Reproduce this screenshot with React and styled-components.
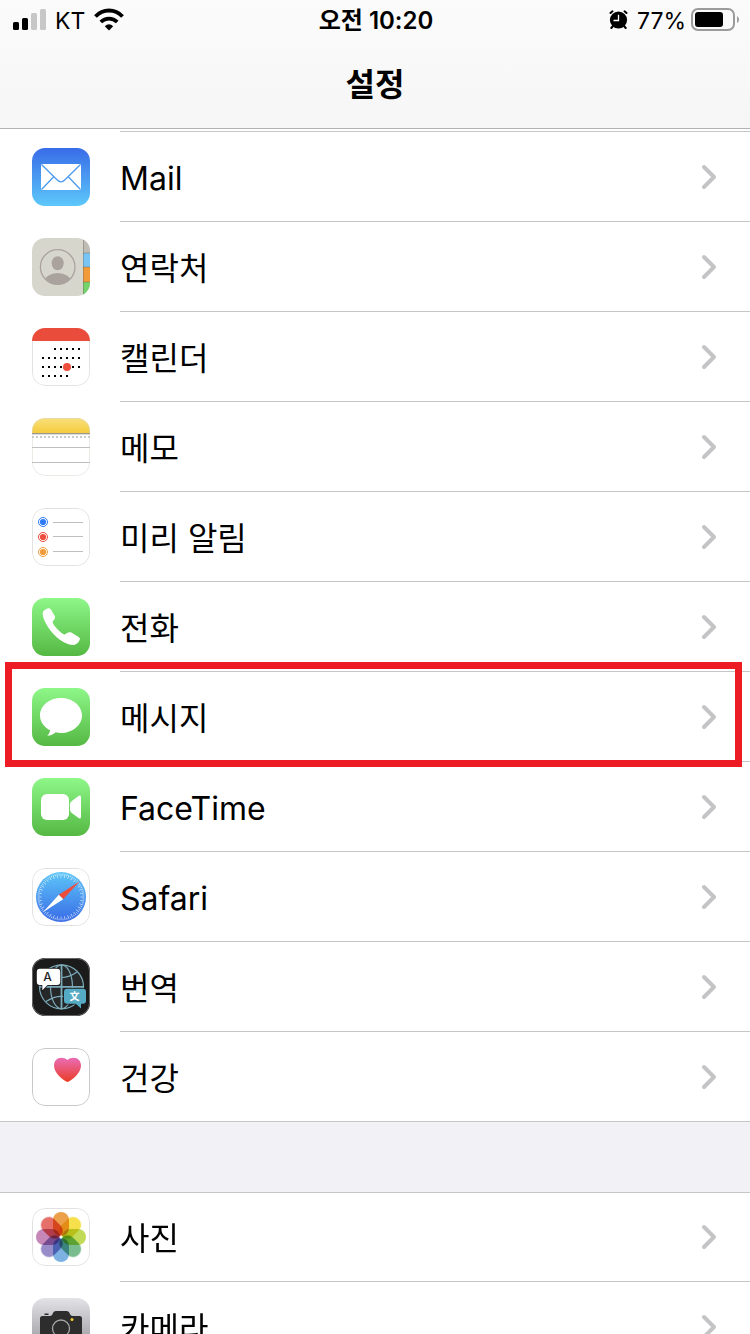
import React from 'react';
import styled, { createGlobalStyle } from 'styled-components';

const GlobalStyle = createGlobalStyle`
  * {
    box-sizing: border-box;
  }

  body {
    margin: 0;
    background: #fff;
    color: #000;
    font-family: Inter, "Noto Sans CJK KR", sans-serif;
  }
`;

const Screen = styled.div`
  display: flex;
  flex-direction: column;
  height: 100vh;
  overflow: hidden;
`;

const Header = styled.header`
  flex: none;
  background: linear-gradient(#fbfbfb, #f6f6f6);
  border-bottom: 1px solid #b3b3b5;
`;

const StatusBar = styled.div`
  display: grid;
  grid-template-columns: 1fr auto 1fr;
  align-items: center;
  height: 40px;
  padding: 0 10px 0 12px;
  font-size: 23px;
  line-height: 24px;
`;

const StatusGroup = styled.div`
  display: flex;
  align-items: center;
  justify-content: ${(props) => (props.$end ? 'flex-end' : 'flex-start')};
  gap: ${(props) => (props.$end ? '5px' : '8px')};
`;

const StatusText = styled.span`
  padding-top: 2px;
`;

const Clock = styled.time`
  padding-top: 2px;
  font-size: 24px;
  font-weight: 600;
`;

const Title = styled.h1`
  margin: 0;
  height: 88px;
  font-size: 32px;
  font-weight: 600;
  line-height: 90px;
  text-align: center;
`;

const Content = styled.main`
  flex: 1;
  min-height: 0;
  overflow-y: auto;
  scrollbar-width: none;
  background: #f2f1f6;
`;

const Group = styled.ul`
  margin: 0 0 70px;
  padding: ${(props) => (props.$continued ? '2px 0 0' : '0')};
  list-style: none;
  background: #fff;
  box-shadow: ${(props) => (props.$continued ? 'none' : 'inset 0 1px #c6c6c8')};
`;

const Divider = styled.li`
  height: 1px;
  margin-left: 120px;
  background: #c6c6c8;
`;

const Item = styled.li`
  position: relative;
`;

const RowLink = styled.a`
  display: flex;
  align-items: center;
  gap: 30px;
  height: 90px;
  padding-left: 32px;
  color: inherit;
  text-decoration: none;
  box-shadow: ${(props) => (props.$last ? 'inset 0 -1px #c6c6c8' : 'none')};
`;

const RowBody = styled.span`
  display: flex;
  flex: 1;
  align-items: center;
  justify-content: space-between;
  height: 90px;
  padding-right: 32px;
  box-shadow: ${(props) => (props.$last ? 'none' : 'inset 0 -1px #c6c6c8')};
`;

const Label = styled.span`
  padding-top: 3px;
  font-size: 32px;
  line-height: 48px;
`;

const AppIcon = styled.svg`
  display: block;
  flex: none;
  width: 58px;
  height: 58px;
  border-radius: 13px;
`;

const Petal = styled.rect`
  mix-blend-mode: multiply;
`;

const Marker = styled.span`
  position: absolute;
  inset: -10px 8px -5px 5px;
  z-index: 1;
  border: 7px solid #ed1c24;
  pointer-events: none;
`;

const Outline = ({ color = '#e2e2e2' }) => (
  <rect x="0.5" y="0.5" width="57" height="57" rx="12.5" fill="none" stroke={color} />
);

const Gradient = ({ id, from, to }) => (
  <linearGradient id={id} x1="0" y1="0" x2="0" y2="1">
    <stop offset="0" stopColor={from} />
    <stop offset="1" stopColor={to} />
  </linearGradient>
);

const MailIcon = () => (
  <AppIcon viewBox="0 0 58 58">
    <Gradient id="mail" from="#386ce8" to="#5dc8fa" />
    <rect width="58" height="58" fill="url(#mail)" />
    <rect x="9" y="16" width="40" height="26" rx="1" fill="#fff" />
    <path
      d="M9.5 16.5 24.5 31.3Q29 36.5 33.5 31.3L48.5 16.5M9.5 41.5 21.5 29M48.5 41.5 36.5 29"
      fill="none"
      stroke="#4d9bef"
      strokeWidth="1.3"
    />
  </AppIcon>
);

const ContactsIcon = () => (
  <AppIcon viewBox="0 0 58 58">
    <clipPath id="face">
      <circle cx="25.7" cy="29" r="17.3" />
    </clipPath>
    <rect width="58" height="58" fill="#d7d6cd" />
    <rect x="51" width="7" height="15" fill="#bfbcb5" />
    <rect x="51" y="15" width="7" height="14" fill="#78c5f5" />
    <rect x="51" y="29" width="7" height="15" fill="#f29a38" />
    <rect x="51" y="44" width="7" height="14" fill="#76d36c" />
    <path d="M51.5 2V56M51 15H58M51 29H58M51 44H58" stroke="#69665b" strokeOpacity="0.4" />
    <circle cx="25.7" cy="29" r="17.3" fill="none" stroke="#aaa29d" strokeWidth="1.3" />
    <ellipse cx="25.7" cy="25.3" rx="6" ry="7" fill="#aaa29d" />
    <ellipse cx="25.7" cy="44" rx="13.5" ry="9" fill="#aaa29d" clipPath="url(#face)" />
  </AppIcon>
);

const calendarDays = [
  [23, 29, 35, 41, 47],
  [11, 17, 23, 29, 35, 41, 47],
  [11, 17, 23, 29, 41, 47],
  [11, 17, 23, 29, 35],
];

const CalendarIcon = () => (
  <AppIcon viewBox="0 0 58 58">
    <rect width="58" height="58" fill="#fff" />
    <Outline />
    <rect width="58" height="13" fill="#e94c3b" />
    {calendarDays.map((days, week) =>
      days.map((x) => (
        <rect key={`${week}-${x}`} x={x - 1} y={20 + week * 9} width="2" height="2" />
      ))
    )}
    <circle cx="35" cy="39" r="4" fill="#ee4f3d" />
  </AppIcon>
);

const NotesIcon = () => (
  <AppIcon viewBox="0 0 58 58">
    <Gradient id="notes" from="#f9e07a" to="#f5cc3e" />
    <rect width="58" height="58" fill="#fff" />
    <rect width="58" height="15" fill="url(#notes)" />
    <Outline color="#d8d5cc80" />
    <path d="M0 15.5H58" stroke="#9c978a" />
    <path d="M0 16.5H58" stroke="#dddcd8" />
    <path d="M0 19H58" stroke="#cbcbcb" strokeWidth="2" strokeDasharray="2 2" />
    <path d="M0 29.5H58M0 44.5H58" stroke="#bfbfc1" />
  </AppIcon>
);

const RemindersIcon = () => (
  <AppIcon viewBox="0 0 58 58">
    <rect width="58" height="58" fill="#fff" />
    <Outline />
    {['#2f7af6', '#ec4d3d', '#f29a37'].map((color, i) => (
      <g key={color}>
        <circle cx="11" cy={14 + i * 15} r="4.5" fill="none" stroke={color} />
        <circle cx="11" cy={14 + i * 15} r="3.1" fill={color} />
      </g>
    ))}
    <path d="M21 14.5H51M21 28.5H51M21 43.5H51" stroke="#c0c0c2" />
  </AppIcon>
);

const PhoneIcon = () => (
  <AppIcon viewBox="0 0 58 58">
    <Gradient id="phone" from="#8df788" to="#55b843" />
    <rect width="58" height="58" fill="url(#phone)" />
    <path
      d="M12 12.5C13.5 11 15.5 10 17 10.2C18 10.3 18.5 10.8 19.2 12L22.8 18C23.3 19 23.2 19.8 22.5 21C21.5 22.7 20.2 23.4 20.8 24.8C22.3 28.5 26.8 33 30.8 35.8C32.3 36.8 33 36.4 34 35.7C36 34.3 37.8 33.8 39.3 34.6L46.6 39C48.2 40 48.2 41 47.4 42.4C46 45.2 43.5 47 41 47C36.5 46.8 30.5 44 25.6 40C18.5 34 12.8 25.3 11 18.3C10.4 16 10.6 14 12 12.5Z"
      fill="#fff"
    />
  </AppIcon>
);

const MessagesIcon = () => (
  <AppIcon viewBox="0 0 58 58">
    <Gradient id="messages" from="#8df788" to="#55b843" />
    <rect width="58" height="58" fill="url(#messages)" />
    <path
      d="M29 10C17.4 10 8 17.8 8 27.4C8 33.6 12 39 18 42.2C17.8 44.5 16.8 46.3 15.2 47.8C18.5 47.6 21.5 46.3 23.8 44.3C25.5 44.7 27.2 44.9 29 44.9C40.6 44.9 50 37 50 27.4C50 17.8 40.6 10 29 10Z"
      fill="#fff"
    />
  </AppIcon>
);

const FaceTimeIcon = () => (
  <AppIcon viewBox="0 0 58 58">
    <Gradient id="facetime" from="#8df788" to="#55b843" />
    <rect width="58" height="58" fill="url(#facetime)" />
    <rect x="9" y="16" width="28" height="26" rx="6" fill="#fff" />
    <path
      d="M38 26.5C38 25 38.5 24.2 39.5 23.3L46.2 18.2C47.7 17 49 17.4 49 19.3V38.7C49 40.6 47.7 41 46.2 39.8L39.5 34.7C38.5 33.8 38 33 38 31.5Z"
      fill="#fff"
    />
  </AppIcon>
);

const SafariIcon = () => (
  <AppIcon viewBox="0 0 58 58">
    <Gradient id="safari" from="#5dc6f9" to="#386be6" />
    <rect width="58" height="58" fill="#fff" />
    <Outline />
    <circle cx="29" cy="29" r="25" fill="url(#safari)" />
    {Array.from({ length: 72 }, (_, i) => (
      <path
        key={i}
        d={i % 2 ? 'M29 5.5V7.5' : 'M29 5.5V9.5'}
        stroke="#fff"
        strokeWidth="0.7"
        strokeOpacity="0.8"
        transform={`rotate(${i * 5} 29 29)`}
      />
    ))}
    <path d="M47.8 13.2 31.2 31.2 26.8 26.8Z" fill="#ed4e3c" />
    <path d="M11 44.3 26.8 26.8 31.2 31.2Z" fill="#fff" />
  </AppIcon>
);

const TranslateIcon = () => (
  <AppIcon viewBox="0 0 58 58">
    <rect width="58" height="58" fill="#1b1b1b" />
    <Outline color="#666" />
    <g fill="none" stroke="#7cabb9" strokeWidth="1.2">
      <circle cx="29.5" cy="28.8" r="22" fill="#262728" />
      <ellipse cx="29.5" cy="28.8" rx="11" ry="22" />
      <path d="M14 14Q29.5 25 45 14M14 43.6Q29.5 33 45 43.6" />
      <path d="M29.5 7V51M7.5 28.8H51.5" strokeWidth="1.8" />
    </g>
    <path
      d="M8 10.7H25Q28.3 10.7 28.3 14V23.7Q28.3 27 25 27H15.5L10.3 32.2V27H8Q4.8 27 4.8 23.7V14Q4.8 10.7 8 10.7Z"
      fill="#fff"
      stroke="#1b1b1b"
      strokeWidth="1.5"
      paintOrder="stroke"
    />
    <path
      d="M35 30.7H51Q54 30.7 54 33.7V42.7Q54 45.7 51 45.7H49V50.5L43.8 45.7H35Q32 45.7 32 42.7V33.7Q32 30.7 35 30.7Z"
      fill="#55abc4"
      stroke="#1b1b1b"
      strokeWidth="1.5"
      paintOrder="stroke"
    />
    <text x="15.5" y="23" textAnchor="middle" fontSize="12" fontWeight="500" fill="#222">A</text>
    <text x="42.5" y="42" textAnchor="middle" fontSize="10" fontWeight="700" fill="#fff">文</text>
  </AppIcon>
);

const HealthIcon = () => (
  <AppIcon viewBox="0 0 58 58">
    <Gradient id="health" from="#ea6cb6" to="#ea3d25" />
    <rect width="58" height="58" fill="#fff" />
    <Outline color="#c8c8c8" />
    <path
      d="M35.5 12C33.8 10.4 31.8 9.7 29.5 9.7C25 9.7 22 13 22 17.5C22 24.5 29 30.5 34.2 33.5Q35.5 34.3 36.8 33.5C42 30.5 49 24.5 49 17.5C49 13 46 9.7 41.5 9.7C39.2 9.7 37.2 10.4 35.5 12Z"
      fill="url(#health)"
    />
  </AppIcon>
);

const petals = [
  '#eda04a',
  '#f5e04b',
  '#c1da58',
  '#79bd8f',
  '#7cb1e2',
  '#988dc8',
  '#c688b8',
  '#e56f69',
];

const PhotosIcon = () => (
  <AppIcon viewBox="0 0 58 58">
    <rect width="58" height="58" fill="#fff" />
    <Outline />
    {petals.map((color, i) => (
      <Petal
        key={color}
        x="21"
        y="4"
        width="16"
        height="24"
        rx="8"
        fill={color}
        transform={`rotate(${i * 45} 29 29)`}
      />
    ))}
    <circle cx="29" cy="29" r="1.5" fill="#fff" />
  </AppIcon>
);

const CameraIcon = () => (
  <AppIcon viewBox="0 0 58 58">
    <Gradient id="camera" from="#e3e3e7" to="#8b8a90" />
    <rect width="58" height="58" fill="url(#camera)" />
    <path
      d="M12.5 15.5H16.5V17H12.5ZM10.5 18H18Q19.8 18 20.5 16.3Q21.5 13 24 13H34.5Q37 13 38 16.3Q38.8 18 40.5 18H47.5Q50 18 50 20.5V42Q50 45 47 45H11Q8 45 8 42V20.5Q8 18 10.5 18Z"
      fill="#2d2d2d"
    />
    <circle cx="29" cy="30.5" r="8.5" fill="none" stroke="#a5a5a8" strokeWidth="1.3" />
    <circle cx="40" cy="21.5" r="1.5" fill="#f5c932" />
  </AppIcon>
);

const Chevron = () => (
  <svg width="18" height="28" viewBox="0 0 18 28" aria-hidden="true">
    <path
      d="M4 4 14 14 4 24"
      fill="none"
      stroke="#c4c4c7"
      strokeWidth="4"
      strokeLinecap="round"
      strokeLinejoin="round"
    />
  </svg>
);

const SignalIcon = () => (
  <svg width="35" height="24" viewBox="0 0 35 24">
    <rect x="1" y="14" width="6" height="8" rx="1.5" />
    <rect x="10" y="10" width="6" height="12" rx="1.5" />
    <rect x="19" y="5" width="6" height="17" rx="1.5" fill="#c7c7c7" />
    <rect x="28" y="1" width="6" height="21" rx="1.5" fill="#c7c7c7" />
  </svg>
);

const WifiIcon = () => (
  <svg width="32" height="24" viewBox="0 0 32 24">
    <path
      d="M2.5 8.5C10 0.5 22 0.5 29.5 8.5M7.8 14C12.5 9.5 19.5 9.5 24.2 14"
      fill="none"
      stroke="#000"
      strokeWidth="3.8"
    />
    <path d="M11.8 18.2Q16 14.5 20.2 18.2L16 22.6Z" />
  </svg>
);

const AlarmIcon = () => (
  <svg width="23" height="20" viewBox="0 0 23 20">
    <circle cx="9.5" cy="10" r="8.6" />
    <path
      d="M1.5 3 3.5 1.3M15.5 1.3 17.5 3M4 16 2.3 18M15 16 16.7 18"
      stroke="#000"
      strokeWidth="2"
      strokeLinecap="round"
    />
    <path d="M9.5 4.8V10.5H4.5" fill="none" stroke="#fff" strokeWidth="1.3" />
  </svg>
);

const BatteryIcon = () => (
  <svg width="49" height="24" viewBox="0 0 49 24">
    <rect x="1" y="1" width="42" height="21" rx="6" fill="none" stroke="#9b9b9b" strokeWidth="2" />
    <rect x="4" y="4" width="28" height="15" rx="3" />
    <path d="M46 8Q48 9 48 11.5T46 15Z" fill="#9b9b9b" />
  </svg>
);

const accountApps = [
  { name: 'Mail', icon: MailIcon },
  { name: '연락처', icon: ContactsIcon },
  { name: '캘린더', icon: CalendarIcon },
  { name: '메모', icon: NotesIcon },
  { name: '미리 알림', icon: RemindersIcon },
  { name: '전화', icon: PhoneIcon },
  { name: '메시지', icon: MessagesIcon, marked: true },
  { name: 'FaceTime', icon: FaceTimeIcon },
  { name: 'Safari', icon: SafariIcon },
  { name: '번역', icon: TranslateIcon },
  { name: '건강', icon: HealthIcon },
];

const mediaApps = [
  { name: '사진', icon: PhotosIcon },
  { name: '카메라', icon: CameraIcon },
];

const SettingsGroup = ({ apps, continued }) => (
  <Group $continued={continued}>
    {continued && <Divider aria-hidden="true" />}
    {apps.map(({ name, icon: Icon, marked }, i) => {
      const last = i === apps.length - 1;
      return (
        <Item key={name}>
          <RowLink href="#" $last={last}>
            <Icon />
            <RowBody $last={last}>
              <Label>{name}</Label>
              <Chevron />
            </RowBody>
          </RowLink>
          {marked && <Marker />}
        </Item>
      );
    })}
  </Group>
);

const App = () => (
  <Screen lang="ko">
    <GlobalStyle />
    <Header>
      <StatusBar>
        <StatusGroup>
          <SignalIcon />
          <StatusText>KT</StatusText>
          <WifiIcon />
        </StatusGroup>
        <Clock>오전 10:20</Clock>
        <StatusGroup $end>
          <AlarmIcon />
          <StatusText>77%</StatusText>
          <BatteryIcon />
        </StatusGroup>
      </StatusBar>
      <Title>설정</Title>
    </Header>
    <Content>
      <SettingsGroup apps={accountApps} continued />
      <SettingsGroup apps={mediaApps} />
    </Content>
  </Screen>
);

export default App;
